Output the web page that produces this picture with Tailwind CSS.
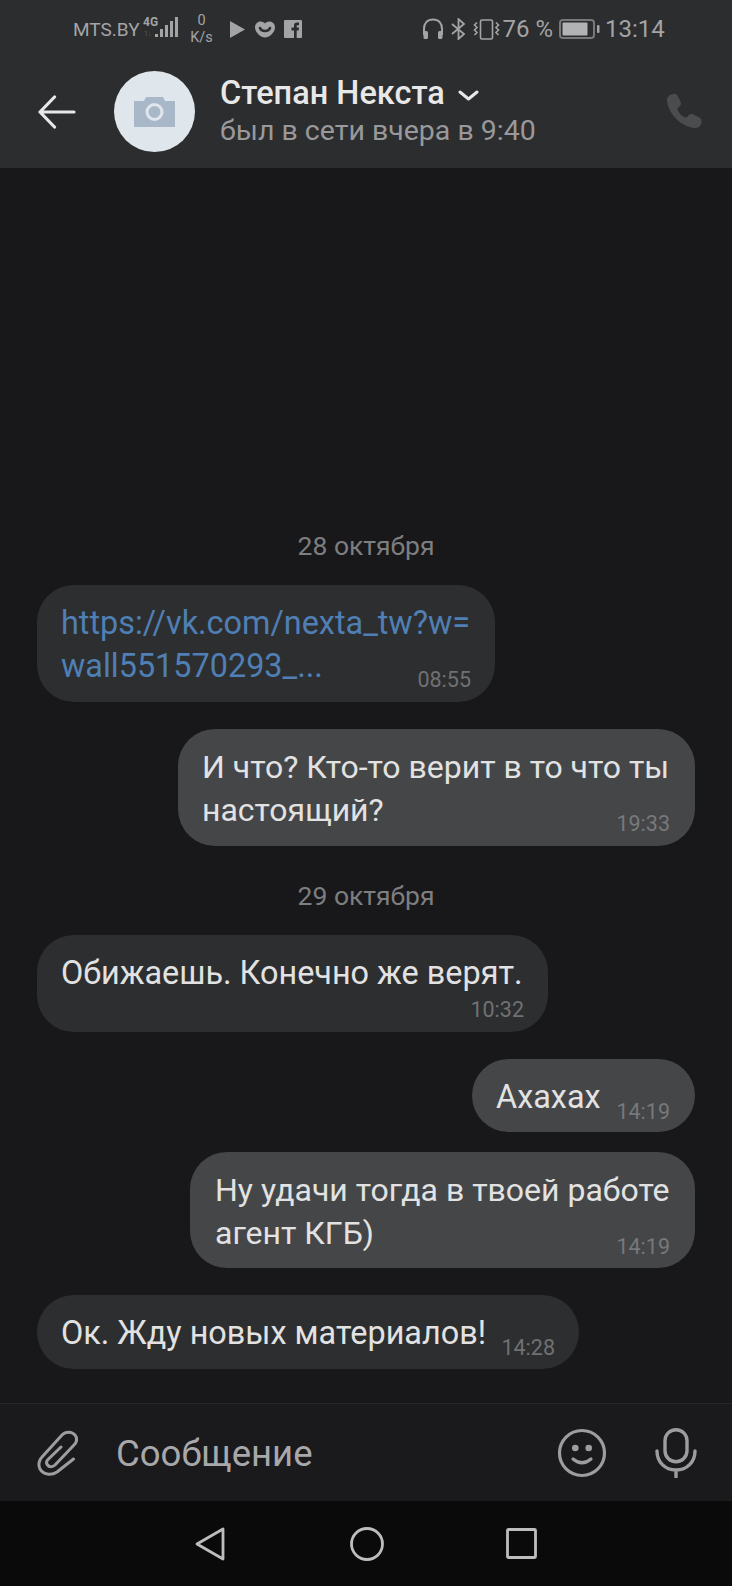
<!DOCTYPE html>
<html lang="en">

<head>
    <meta charset="UTF-8">
    <meta name="viewport" content="width=device-width, initial-scale=1.0">
    <script src="https://cdn.jsdelivr.net/npm/@tailwindcss/browser@4"></script>
    <title>Chat</title>
</head>

<body class="bg-[#18181a]">
    <div class="w-[732px] h-[1586px] flex flex-col overflow-hidden font-['Roboto',sans-serif]">

        <!-- header -->
        <header class="h-[168px] shrink-0 bg-[#2c2d2f] flex flex-col">
            <!-- status bar -->
            <div class="h-[56px] pt-[2px] pl-[73px] flex items-center text-[#a3a4a6]">
                <span class="text-[19px] leading-none">MTS.BY</span>
                <svg class="ml-[3px]" width="36" height="26" viewBox="0 0 36 26" fill="#a3a4a6">
                    <text x="0" y="10" font-size="12" font-weight="700" font-family="Roboto">4G</text>
                    <text x="1" y="20" font-size="7" fill="#5c5d5f" font-family="Roboto">1↓</text>
                    <rect x="12" y="18" width="3" height="3" />
                    <rect x="17" y="13" width="3" height="8" />
                    <rect x="22" y="9" width="3" height="12" />
                    <rect x="27" y="5" width="3" height="16" />
                    <rect x="32" y="1" width="3" height="20" />
                </svg>
                <div class="ml-[11px] w-[24px] flex flex-col items-center text-[14.500px] leading-[17px]">
                    <span>0</span>
                    <span>K/s</span>
                </div>
                <svg class="ml-[16px]" width="15" height="17" viewBox="0 0 15 17" fill="#a3a4a6">
                    <path d="M0 0 L15 8.500 L0 17 Z" />
                </svg>
                <svg class="ml-[10px]" width="20" height="17" viewBox="0 0 20 17">
                    <path d="M5.500 0.500 C8 0.500 9.200 1.500 10 2.500 C10.800 1.500 12 0.500 14.500 0.500 C17.500 0.500 20 3 20 6.500 C20 11.500 14 16.500 10 16.500 C6 16.500 0 11.500 0 6.500 C0 3 2.500 0.500 5.500 0.500 Z" fill="#a3a4a6" />
                    <path d="M5 7 C6.500 11 13.500 11 15 7" fill="none" stroke="#2c2d2f" stroke-width="2.500" stroke-linecap="round" />
                </svg>
                <svg class="ml-[9px]" width="18" height="18" viewBox="0 0 18 18">
                    <rect width="18" height="18" rx="1" fill="#a3a4a6" />
                    <path d="M10 18 V10.500 H7.500 V7.500 H10 V5.500 C10 3.500 11.200 2.500 13 2.500 H15 V5.200 H13.500 C12.800 5.200 12.700 5.600 12.700 6.200 V7.500 H15 L14.600 10.500 H12.700 V18 Z" fill="#2c2d2f" />
                </svg>

                <svg class="ml-[120px]" width="22" height="22" viewBox="0 0 22 22" fill="none" stroke="#a3a4a6" stroke-width="2">
                    <path d="M2 17 V11 C2 5 5.500 1.500 11 1.500 C16.500 1.500 20 5 20 11 V17" />
                    <rect x="1.500" y="13" width="4.500" height="8" rx="1.500" fill="#a3a4a6" stroke="none" />
                    <rect x="16" y="13" width="4.500" height="8" rx="1.500" fill="#a3a4a6" stroke="none" />
                </svg>
                <svg class="ml-[7px]" width="15" height="22" viewBox="0 0 15 22" fill="none" stroke="#a3a4a6" stroke-width="1.800">
                    <path d="M1 6 L13 16 L7.500 21 V1 L13 6 L1 16" />
                </svg>
                <svg class="ml-[7px]" width="27" height="21" viewBox="0 0 27 21" fill="none" stroke="#a3a4a6" stroke-width="1.600">
                    <rect x="7.500" y="1" width="12" height="19" rx="1.500" />
                    <path d="M4 3.500 L1.500 6 L4 8.500 L1.500 11 L4 13.500 L1.500 16" />
                    <path d="M23 3.500 L25.500 6 L23 8.500 L25.500 11 L23 13.500 L25.500 16" />
                </svg>
                <span class="ml-[3px] text-[24px] leading-none whitespace-nowrap">76 %</span>
                <svg class="ml-[6px]" width="41" height="20" viewBox="0 0 41 20" fill="none">
                    <rect x="1" y="1" width="34" height="18" rx="3" stroke="#77787a" stroke-width="2" />
                    <rect x="3.500" y="3.500" width="25" height="13" rx="1" fill="#b2b3b5" />
                    <rect x="38" y="6" width="2.500" height="8" rx="1" fill="#a3a4a6" />
                </svg>
                <span class="ml-[5px] text-[24px] leading-none">13:14</span>
            </div>

            <!-- title row -->
            <div class="flex-1 flex items-start pl-[38px] pr-[30px] pt-[15px]">
                <svg class="mt-[24px]" width="38" height="34" viewBox="0 0 38 34" fill="none" stroke="#e8e8e8" stroke-width="3.200" stroke-linecap="round" stroke-linejoin="round">
                    <path d="M16.500 2 L2 17 L16.500 32 M2 17 H36" />
                </svg>
                <div class="ml-[38px] w-[81px] h-[81px] rounded-full bg-[#dfe6ec] flex items-center justify-center">
                    <svg width="41" height="30" viewBox="0 0 41 30">
                        <path d="M0 4 H10 L12 0 H29 L31 4 H41 V30 H0 Z" fill="#a9b8c9" />
                        <circle cx="20.500" cy="15" r="7.500" fill="none" stroke="#dfe6ec" stroke-width="3" />
                    </svg>
                </div>
                <div class="ml-[25px] flex-1 pt-[3px]">
                    <div class="flex items-center h-[38px]">
                        <span class="text-[32.500px] leading-[38px] font-medium text-[#e8e8e8]">Степан Некста</span>
                        <svg class="ml-[13px] mt-[4px]" width="21" height="11" viewBox="0 0 21 11" fill="none" stroke="#e8e8e8" stroke-width="3" stroke-linecap="round" stroke-linejoin="round">
                            <path d="M2 2 L10.500 9 L19 2" />
                        </svg>
                    </div>
                    <div class="text-[28.500px] leading-[38px] text-[#99999b]">был в сети вчера в 9:40</div>
                </div>
                <svg class="mt-[22px]" width="36" height="36" viewBox="0 0 36 36">
                    <path d="M7 1 C4 1.500 1 4 1 7 C1.500 20 15 34 29 35 C32 35 35 33 35.500 30 C36 27 35 25 32.500 24 L27.500 21.500 C25.500 20.500 23.500 21 22 23 C21 24.500 19.500 25 18 24 C15.500 22.500 13.500 20.500 12 18 C11 16.500 11.500 15 13 14 C15 12.500 15.500 10.500 14.500 8.500 L12 3.500 C11 1.500 9.500 0.500 7 1 Z" fill="#4b4c4e" />
                </svg>
            </div>
        </header>

        <!-- messages -->
        <main class="flex-1 flex flex-col justify-end pb-[34px] text-[32.400px] leading-[43px] text-[#e2e2e2]">
            <div class="h-[40px] -mt-[1px] pb-[2px] flex items-center justify-center text-[26.500px] text-[#7d7e80]">28 октября</div>

            <div class="mt-[19px] ml-[37px] w-[458px] h-[117px] rounded-[37px] bg-[#2d2e30] pl-[24px] pt-[17px]">
                <div class="whitespace-nowrap text-[#4f7fb4]">https://vk.com/nexta_tw?w=<br>wall551570293_...</div>
                <div class="-mt-[21px] pr-[24px] text-right text-[21.500px] leading-[26px] text-[#707173]">08:55</div>
            </div>

            <div class="mt-[27px] ml-[178px] w-[517px] h-[117px] rounded-[37px] bg-[#454648] pl-[24px] pt-[17px]">
                <div class="whitespace-nowrap text-[32px]">И что? Кто-то верит в то что ты<br>настоящий?</div>
                <div class="-mt-[21px] pr-[25px] text-right text-[21.500px] leading-[26px] text-[#77787a]">19:33</div>
            </div>

            <div class="mt-[30px] h-[40px] pb-[2px] flex items-center justify-center text-[26.500px] text-[#7d7e80]">29 октября</div>

            <div class="mt-[19px] ml-[37px] w-[511px] h-[97px] rounded-[37px] bg-[#2d2e30] pl-[24px] pt-[17px]">
                <div class="whitespace-nowrap">Обижаешь. Конечно же верят.</div>
                <div class="mt-[2px] pr-[24px] text-right text-[21.500px] leading-[26px] text-[#707173]">10:32</div>
            </div>

            <div class="mt-[27px] ml-[472px] w-[223px] h-[73px] rounded-[37px] bg-[#454648] pl-[24px] pr-[25px] pt-[17px] flex justify-between">
                <span>Ахахах</span>
                <span class="mt-[23px] text-[21.500px] leading-[26px] text-[#77787a]">14:19</span>
            </div>

            <div class="mt-[20px] ml-[190px] w-[505px] h-[116px] rounded-[37px] bg-[#454648] pl-[25px] pt-[17px]">
                <div class="whitespace-nowrap text-[32px]">Ну удачи тогда в твоей работе<br>агент КГБ)</div>
                <div class="-mt-[21px] pr-[25px] text-right text-[21.500px] leading-[26px] text-[#77787a]">14:19</div>
            </div>

            <div class="mt-[27px] ml-[37px] w-[542px] h-[74px] rounded-[37px] bg-[#2d2e30] pl-[24px] pr-[24px] pt-[17px] flex justify-between">
                <span class="whitespace-nowrap">Ок. Жду новых материалов!</span>
                <span class="mt-[23px] text-[21.500px] leading-[26px] text-[#707173]">14:28</span>
            </div>
        </main>

        <!-- composer -->
        <footer class="h-[98px] shrink-0 border-t border-[#252628] flex items-center pl-[37px] pr-[35px] bg-[#1a1a1c]">
            <svg width="41" height="46" viewBox="0 0 41 46" fill="none" stroke="#9d9d9f" stroke-width="3" stroke-linecap="round" stroke-linejoin="round">
                <path d="M36.500 29 L20 42 C14 46 6 44.500 3 39 C1 35 2 30 5 27 L25 5 C29 1 35 1.500 38 5 C40.500 8.500 40 12 37 15 L18 35 C15.500 37.500 12 37 10.500 35 C9 33 9.500 31 11 29.500 L24 17" />
            </svg>
            <span class="ml-[38px] pt-[3px] flex-1 text-[36.500px] leading-none text-[#a8a8aa]">Сообщение</span>
            <svg width="50" height="50" viewBox="0 0 50 50" fill="none" stroke="#9d9d9f" stroke-width="3.200" stroke-linecap="round">
                <circle cx="25" cy="25" r="22.500" />
                <circle cx="18.300" cy="20" r="3.300" fill="#9d9d9f" stroke="none" />
                <circle cx="31.700" cy="20" r="3.300" fill="#9d9d9f" stroke="none" />
                <path d="M16 31 Q25 38.500 34 31" />
            </svg>
            <svg class="ml-[48px]" width="42" height="50" viewBox="0 0 42 50" fill="none" stroke="#9d9d9f" stroke-width="3.400" stroke-linecap="round">
                <rect x="10" y="1.700" width="22" height="32" rx="11" />
                <path d="M2 23 C2 34 10 42 21 42 C32 42 40 34 40 23 M21 42 V49" />
            </svg>
        </footer>

        <!-- android nav -->
        <nav class="h-[85px] shrink-0 bg-[#0a0a0a] flex items-start pt-[26px] pl-[195px]">
            <svg width="30" height="34" viewBox="0 0 30 34" fill="none" stroke="#bdbdbd" stroke-width="2.800" stroke-linejoin="round">
                <path d="M28 2 V32 L2 17 Z" />
            </svg>
            <svg class="ml-[125px]" width="34" height="34" viewBox="0 0 34 34" fill="none" stroke="#bdbdbd" stroke-width="2.800">
                <circle cx="17" cy="17" r="15.500" />
            </svg>
            <svg class="ml-[122px] mt-[1px]" width="31" height="31" viewBox="0 0 31 31" fill="none" stroke="#bdbdbd" stroke-width="2.800" stroke-linejoin="round">
                <rect x="1.500" y="1.500" width="28" height="28" rx="1" />
            </svg>
        </nav>
    </div>
</body>

</html>
